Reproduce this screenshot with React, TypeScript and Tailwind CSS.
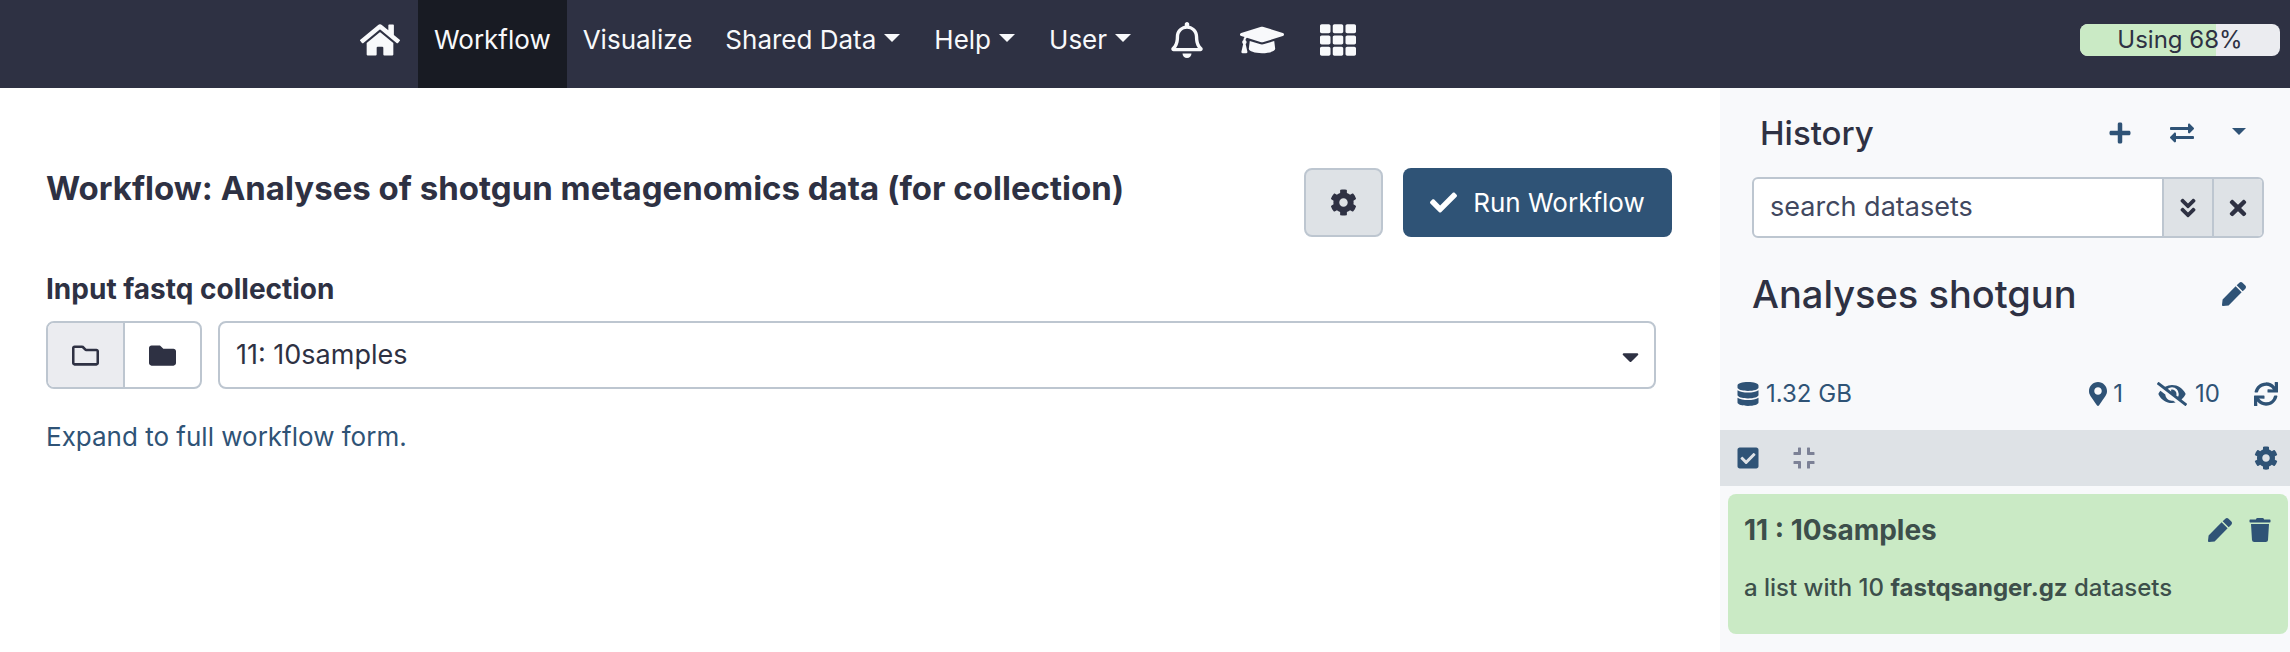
import { type ReactNode } from "react";
import {
  FaHome,
  FaRegBell,
  FaGraduationCap,
  FaTh,
  FaCog,
  FaCheck,
  FaRegFolder,
  FaFolder,
  FaPlus,
  FaExchangeAlt,
  FaAngleDoubleDown,
  FaTimes,
  FaPen,
  FaDatabase,
  FaMapMarkerAlt,
  FaEyeSlash,
  FaSync,
  FaCheckSquare,
  FaCompress,
  FaTrash,
  FaCaretDown,
} from "react-icons/fa";

function Caret({ className }: { className: string }) {
  return (
    <svg viewBox="0 0 16 8" className={className} aria-hidden="true">
      <path d="M0 0h16l-8 8z" fill="currentColor" />
    </svg>
  );
}

function NavItem({ children, active, menu }: { children: ReactNode; active?: boolean; menu?: boolean }) {
  const look = active
    ? "flex items-center bg-[#181b23] px-4 pb-2"
    : menu
      ? "flex items-center gap-2 px-[17px] pb-2"
      : "flex items-center px-4 pb-2";
  return (
    <a href="#" className={look}>
      {children}
      {menu && <Caret className="mb-1 h-2 w-4" />}
    </a>
  );
}

function Masthead() {
  return (
    <header className="flex h-[88px] items-stretch bg-[#2e3143] pr-[10px] text-[26px] leading-[40px]">
      <nav className="ml-[342px] flex items-stretch text-[#f8f9fb]">
        <a href="#" aria-label="Home" className="flex w-[76px] items-center justify-center pb-2">
          <FaHome className="h-[36px] w-[40px]" />
        </a>
        <NavItem active>Workflow</NavItem>
        <NavItem>Visualize</NavItem>
        <NavItem menu>Shared Data</NavItem>
        <NavItem menu>Help</NavItem>
        <NavItem menu>User</NavItem>
        <a href="#" aria-label="Notifications" className="ml-1 flex w-[70px] items-center justify-center pb-2">
          <FaRegBell className="size-[36px]" />
        </a>
        <a href="#" aria-label="Tutorials" className="flex w-20 items-center justify-center pb-2">
          <FaGraduationCap className="h-[36px] w-[44px]" />
        </a>
        <a href="#" aria-label="Applications" className="flex w-[72px] items-center justify-center pb-2">
          <FaTh className="size-[36px]" />
        </a>
      </nav>
      <div className="ml-auto flex items-center pb-2">
        <div
          role="progressbar"
          aria-label="Storage quota"
          aria-valuenow={68}
          className="relative h-8 w-[200px] overflow-hidden rounded-lg bg-[#ebecf0]"
        >
          <div className="h-full w-[68%] bg-[#caeac5]" />
          <span className="absolute inset-0 text-center text-[24px] leading-8 text-[#2e3143]">Using 68%</span>
        </div>
      </div>
    </header>
  );
}

function WorkflowForm() {
  return (
    <main className="min-w-0 flex-1 pt-20 pr-12 pl-[46px]">
      <div className="flex items-start justify-between">
        <h1 className="text-[33px] leading-[40px] font-bold">
          Workflow: Analyses of shotgun metagenomics data (for collection)
        </h1>
        <div className="flex gap-5">
          <button
            type="button"
            aria-label="Settings"
            className="flex h-[69px] w-[79px] items-center justify-center rounded-lg border-2 border-[#bdc6d0] bg-[#dee2e6]"
          >
            <FaCog className="size-[27px]" />
          </button>
          <button
            type="button"
            className="flex h-[69px] w-[269px] items-center justify-center gap-4 rounded-lg bg-[#2f5376] text-[26px] text-white"
          >
            <FaCheck className="size-[27px]" />
            Run Workflow
          </button>
        </div>
      </div>

      <div className="mt-8 pr-4">
        <label htmlFor="collection" className="block text-[28px] leading-[40px] font-bold">
          Input fastq collection
        </label>
        <div className="mt-3 flex h-[68px] gap-4">
          <div className="flex w-[156px] overflow-hidden rounded-lg border-2 border-[#bdc6d0]">
            <button
              type="button"
              aria-label="Single collection"
              className="flex flex-1 items-center justify-center border-r-2 border-[#bdc6d0] bg-[#ebecf0]"
            >
              <FaRegFolder className="size-[27px]" />
            </button>
            <button type="button" aria-label="Multiple collections" className="flex flex-1 items-center justify-center">
              <FaFolder className="size-[27px]" />
            </button>
          </div>
          <div className="relative flex-1">
            <select
              id="collection"
              className="h-full w-full appearance-none rounded-lg border-2 border-[#bdc6d0] bg-white px-4 text-[27px]"
            >
              <option>11: 10samples</option>
            </select>
            <FaCaretDown className="pointer-events-none absolute top-[22px] right-3 size-[27px]" />
          </div>
        </div>
      </div>

      <a href="#" className="mt-7 inline-block text-[26px] leading-[40px] text-[#2f5376]">
        Expand to full workflow form.
      </a>
    </main>
  );
}

function HistoryPanel() {
  return (
    <aside className="w-[570px] shrink-0 bg-[#f8f9fb]">
      <div className="flex items-center justify-between pt-6 pr-11 pl-10">
        <h2 className="text-[33px] leading-[42px] font-medium">History</h2>
        <div className="flex items-center gap-[38px] text-[#2f5376]">
          <button type="button" aria-label="Create new history">
            <FaPlus className="size-6" />
          </button>
          <button type="button" aria-label="Switch to history">
            <FaExchangeAlt className="size-6" />
          </button>
          <button type="button" aria-label="History options">
            <Caret className="mb-1 h-[7px] w-[14px]" />
          </button>
        </div>
      </div>

      <div className="mt-[23px] mr-[26px] ml-8 flex h-[61px] overflow-hidden rounded-md border-2 border-[#bdc6d0] bg-white">
        <input
          type="text"
          aria-label="search datasets"
          placeholder="search datasets"
          className="min-w-0 flex-1 px-4 text-[27px] placeholder:text-[#41485f]"
        />
        <button
          type="button"
          aria-label="Advanced search"
          className="flex w-[50px] items-center justify-center border-l-2 border-[#bdc6d0] bg-[#dee2e6]"
        >
          <FaAngleDoubleDown className="size-6" />
        </button>
        <button
          type="button"
          aria-label="Clear search"
          className="flex w-[50px] items-center justify-center border-l-2 border-[#bdc6d0] bg-[#dee2e6]"
        >
          <FaTimes className="size-6" />
        </button>
      </div>

      <div className="mt-8 flex items-center justify-between pr-11 pl-8">
        <h3 className="text-[38px] leading-[48px] font-medium">Analyses shotgun</h3>
        <button type="button" aria-label="Edit history" className="text-[#2f5376]">
          <FaPen className="size-6" />
        </button>
      </div>

      <div className="mt-[58px] flex h-9 items-center pr-3 pl-4 text-[24px] text-[#2f5376]">
        <button type="button" className="mr-auto flex items-center gap-1.5">
          <FaDatabase className="size-6" />
          1.32 GB
        </button>
        <button type="button" className="mr-[34px] flex items-center gap-1.5">
          <FaMapMarkerAlt className="h-6 w-[18px]" />1
        </button>
        <button type="button" className="mr-[34px] flex items-center gap-2">
          <FaEyeSlash className="h-6 w-[30px]" />
          10
        </button>
        <button type="button" aria-label="Refresh">
          <FaSync className="size-6" />
        </button>
      </div>

      <div className="mt-[18px] flex h-14 items-center bg-[#dee2e6] pr-3 pl-4 text-[#2f5376]">
        <button type="button" aria-label="Select items">
          <FaCheckSquare className="size-6" />
        </button>
        <button type="button" aria-label="Collapse items" className="ml-8 text-[#7c8196]">
          <FaCompress className="size-6" />
        </button>
        <button type="button" aria-label="Selection settings" className="ml-auto">
          <FaCog className="size-6" />
        </button>
      </div>

      <article className="mt-2 mr-[2px] ml-2 h-[140px] rounded-lg bg-[#caeac5] px-4 pt-4 text-[#3d4f4b]">
        <div className="flex items-center justify-between">
          <h4 className="text-[28px] leading-[40px] font-bold">11 : 10samples</h4>
          <div className="flex gap-4 text-[#2f5376]">
            <button type="button" aria-label="Edit">
              <FaPen className="size-6" />
            </button>
            <button type="button" aria-label="Delete">
              <FaTrash className="size-6" />
            </button>
          </div>
        </div>
        <p className="mt-5 text-[24px] leading-9 font-medium">
          a list with 10 <b>fastqsanger.gz</b> datasets
        </p>
      </article>
    </aside>
  );
}

export default function App() {
  return (
    <div className="flex min-h-screen flex-col bg-white font-['Inter','Liberation_Sans',sans-serif] text-[#2e3143]">
      <Masthead />
      <div className="flex flex-1">
        <WorkflowForm />
        <HistoryPanel />
      </div>
    </div>
  );
}
